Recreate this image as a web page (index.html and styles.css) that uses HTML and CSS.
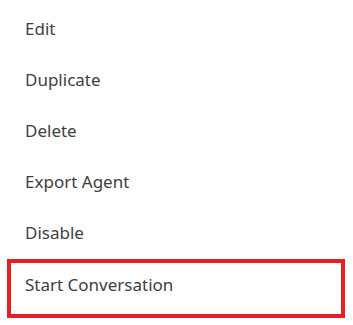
FILE: index.html
```html
<!DOCTYPE html>
<html lang="en">
<head>
  <meta charset="UTF-8">
  <meta name="viewport" content="width=device-width, initial-scale=1.0">
  <title>Agent Menu</title>
  <link rel="stylesheet" href="styles.css">
</head>
<body>
  <!-- Agent actions menu -->
  <ul class="menu">
    <li class="menu-item">Edit</li>
    <li class="menu-item">Duplicate</li>
    <li class="menu-item">Delete</li>
    <li class="menu-item">Export Agent</li>
    <li class="menu-item">Disable</li>
    <li class="menu-item highlighted">Start Conversation</li>
  </ul>
</body>
</html>
```

FILE: styles.css
```css
body {
  margin: 0;
  padding: 0;
  background: #ffffff;
  font-family: "Noto Sans", "Open Sans", sans-serif;
  color: #404040;
}

.menu {
  list-style: none;
  margin: 0;
  padding: 3px 0 0;
  width: 353px;
}

.menu-item {
  height: 51px;
  line-height: 51px;
  padding-left: 25px;
  font-size: 17px;
  cursor: pointer;
}

.highlighted {
  box-sizing: border-box;
  height: 59px;
  line-height: 43px;
  margin: 1px 8px 0 7px;
  padding-left: 14px;
  border: 4px solid #e32124;
}
```
